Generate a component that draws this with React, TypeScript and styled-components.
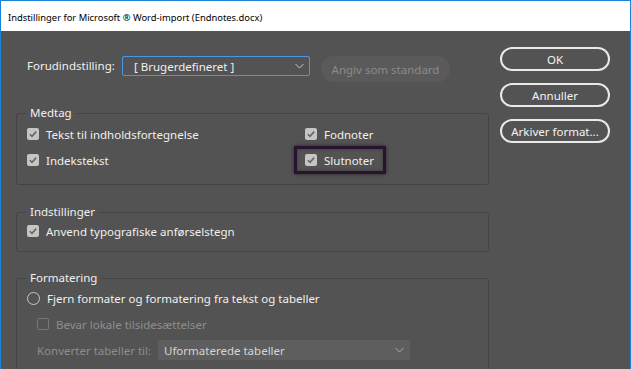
import styled, { createGlobalStyle } from "styled-components";

const GlobalStyle = createGlobalStyle`
  html, body {
    margin: 0;
    padding: 0;
    height: 369px;
    overflow: hidden;
    background: #535353;
  }
  * { box-sizing: border-box; }
`;

const Window = styled.div`
  width: 631px;
  height: 369px;
  border: 1px solid #1a83d8;
  border-bottom: none;
  background: #535353;
  font-family: "Noto Sans", "Open Sans", sans-serif;
  font-size: 11.5px;
  color: #f0f0f0;
  display: flex;
  flex-direction: column;
  overflow: hidden;
`;

const TitleBar = styled.div`
  height: 30px;
  flex: none;
  background: #ffffff;
  color: #000000;
  display: flex;
  align-items: center;
  padding: 2px 0 0 7px;
  font-size: 9.4px;
`;

const Body = styled.div`
  display: flex;
  gap: 11px;
  padding-left: 15px;
  flex: 1;
`;

const Main = styled.div`
  width: 473px;
  display: flex;
  flex-direction: column;
`;

const Side = styled.div`
  width: 110px;
  padding-top: 16px;
  display: flex;
  flex-direction: column;
  gap: 12px;
`;

const DialogButton = styled.button`
  height: 24px;
  width: 110px;
  border: 2px solid #e9e9e9;
  border-radius: 12px;
  background: transparent;
  color: #f4f4f4;
  font: inherit;
  padding: 0;
`;

const PresetRow = styled.div`
  display: flex;
  align-items: flex-start;
  margin-top: 25px;
  padding-left: 11px;
`;

const PresetLabel = styled.span`
  width: 95px;
  line-height: 20px;
`;

const Select = styled.div<{ $width: number; $focused?: boolean }>`
  width: ${(p) => p.$width}px;
  height: 20px;
  display: flex;
  align-items: center;
  justify-content: space-between;
  padding: 0 5px 0 ${(p) => (p.$focused ? 11 : 5)}px;
  border: 1px solid ${(p) => (p.$focused ? "#4a96e2" : "transparent")};
  border-radius: 2px;
  background: ${(p) => (p.$focused ? "#535353" : "#5e5e5e")};
  color: ${(p) => (p.$focused ? "#f0f0f0" : "#d6d6d6")};
`;

const GhostButton = styled.button`
  margin-left: 11px;
  height: 26px;
  width: 129px;
  border: none;
  border-radius: 13px;
  background: #5a5a5a;
  color: #8b8b8b;
  font: inherit;
  padding: 0;
`;

const Group = styled.fieldset<{ $top: number; $pad: number; $bottom: number }>`
  margin: ${(p) => p.$top}px 0 0 0;
  padding: ${(p) => p.$pad}px 0 ${(p) => p.$bottom}px 10px;
  border: 1px solid #444444;
  border-radius: 3px;
  min-width: 0;
`;

const Legend = styled.legend`
  margin-left: -1px;
  padding: 0 4px;
  line-height: 14px;
  color: #f0f0f0;
`;

const CheckGrid = styled.div`
  display: grid;
  grid-template-columns: 278px auto;
`;

const Row = styled.label<{ $height: number; $indent?: number; $dim?: boolean }>`
  position: relative;
  display: flex;
  align-items: center;
  gap: 7px;
  height: ${(p) => p.$height}px;
  padding-left: ${(p) => p.$indent ?? 0}px;
  color: ${(p) => (p.$dim ? "#8e8e8e" : "#f0f0f0")};
  white-space: nowrap;
`;

const RowLabel = styled.span`
  width: 114px;
`;

const Box = styled.span<{ $checked: boolean }>`
  width: 12px;
  height: 12px;
  flex: none;
  border-radius: 2px;
  background: ${(p) => (p.$checked ? "#c5c5c5" : "transparent")};
  border: ${(p) => (p.$checked ? "none" : "1px solid #777777")};
  display: flex;
  align-items: center;
  justify-content: center;
`;

const Radio = styled.span`
  width: 13px;
  height: 13px;
  flex: none;
  border-radius: 50%;
  border: 1.5px solid #c9c9c9;
`;

const Highlight = styled.span`
  position: absolute;
  left: -11px;
  top: -1px;
  width: 92px;
  height: 28px;
  border: 3px solid #2a1233;
  box-shadow: 0 0 4px rgba(0, 0, 0, 0.55), inset 0 0 3px rgba(0, 0, 0, 0.35);
  pointer-events: none;
`;

const Chevron = ({ color }: { color: string }) => (
  <svg width="9" height="6" viewBox="0 0 9 6">
    <polyline points="0.5,1 4.5,5 8.5,1" fill="none" stroke={color} strokeWidth="1" />
  </svg>
);

const Check = ({ checked }: { checked: boolean }) => (
  <Box $checked={checked}>
    {checked && (
      <svg width="12" height="12" viewBox="0 0 12 12">
        <polyline points="2.8,6.2 5,8.4 9.2,3.6" fill="none" stroke="#676767" strokeWidth="1.6" />
      </svg>
    )}
  </Box>
);

export default function App() {
  return (
    <>
      <GlobalStyle />
      <Window>
        <TitleBar>Indstillinger for Microsoft ® Word-import (Endnotes.docx)</TitleBar>
        <Body>
          <Main>
            <PresetRow>
              <PresetLabel>Forudindstilling:</PresetLabel>
              <Select $width={188} $focused>
                <span>[ Brugerdefineret ]</span>
                <Chevron color="#c8c8c8" />
              </Select>
              <GhostButton>Angiv som standard</GhostButton>
            </PresetRow>

            <Group $top={24} $pad={1} $bottom={11}>
              <Legend>Medtag</Legend>
              <CheckGrid>
                <Row $height={26}>
                  <Check checked />
                  Tekst til indholdsfortegnelse
                </Row>
                <Row $height={26}>
                  <Check checked />
                  Fodnoter
                </Row>
                <Row $height={26}>
                  <Check checked />
                  Indekstekst
                </Row>
                <Row $height={26}>
                  <Highlight />
                  <Check checked />
                  Slutnoter
                </Row>
              </CheckGrid>
            </Group>

            <Group $top={20} $pad={0} $bottom={8}>
              <Legend>Indstillinger</Legend>
              <Row $height={24}>
                <Check checked />
                Anvend typografiske anførselstegn
              </Row>
            </Group>

            <Group $top={19} $pad={0} $bottom={20}>
              <Legend>Formatering</Legend>
              <Row $height={27}>
                <Radio />
                Fjern formater og formatering fra tekst og tabeller
              </Row>
              <Row $height={24} $indent={10} $dim>
                <Check checked={false} />
                Bevar lokale tilsidesættelser
              </Row>
              <Row $height={28} $indent={10} $dim>
                <RowLabel>Konverter tabeller til:</RowLabel>
                <Select $width={252}>
                  <span>Uformaterede tabeller</span>
                  <Chevron color="#aaaaaa" />
                </Select>
              </Row>
            </Group>
          </Main>
          <Side>
            <DialogButton>OK</DialogButton>
            <DialogButton>Annuller</DialogButton>
            <DialogButton>Arkiver format...</DialogButton>
          </Side>
        </Body>
      </Window>
    </>
  );
}
